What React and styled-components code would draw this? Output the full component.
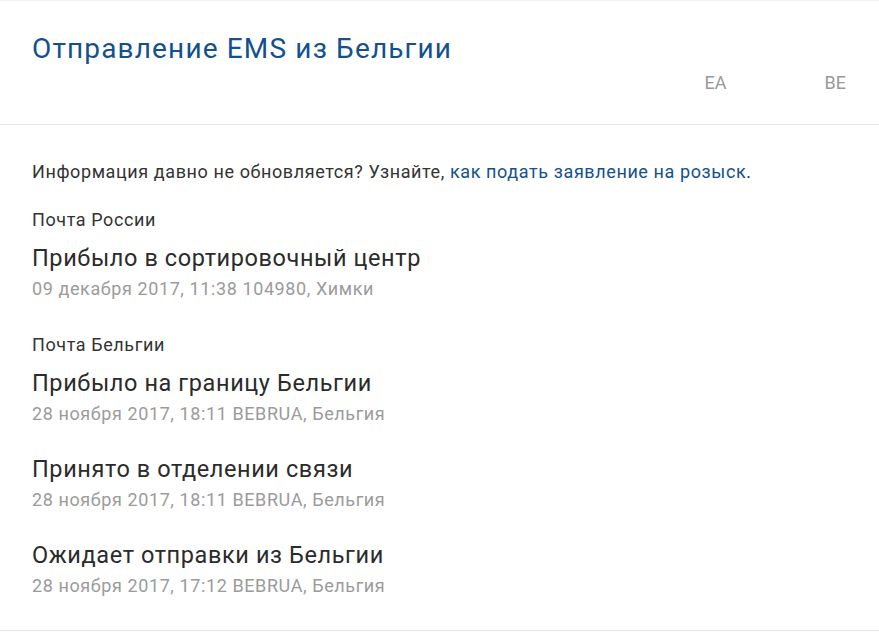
import React from "react";
import styled, { createGlobalStyle } from "styled-components";

const Global = createGlobalStyle`
  html, body { margin: 0; padding: 0; background: #fff; }
  body { font-family: Roboto, "Noto Sans", Arial, sans-serif; -webkit-font-smoothing: antialiased; }
`;

const Card = styled.div`
  border-top: 1px solid #f0f0f0;
  border-bottom: 1px solid #e6e6e6;
  background: #fff;
`;

const Header = styled.header`
  padding: 31px 33px 29px 32px;
  border-bottom: 1px solid #e6e6e6;
  display: flex;
  flex-direction: column;
  gap: 5px;
`;

const Title = styled.h1`
  margin: 0;
  font-size: 28px;
  line-height: 34px;
  letter-spacing: 1.15px;
  font-weight: 400;
  color: #13508f;
`;

const Tracking = styled.div`
  align-self: flex-end;
  font-size: 18px;
  line-height: 24px;
  color: #9a9a9a;
  display: flex;
`;

const Hidden = styled.span`
  display: inline-block;
  width: 98px;
`;

const Body = styled.section`
  padding: 35px 32px 29px;
  letter-spacing: 0.6px;
`;

const Info = styled.p`
  margin: 0 0 24px;
  font-size: 18px;
  line-height: 24px;
  color: #333;
`;

const Link = styled.a`
  color: #13508f;
  text-decoration: none;
`;

const Group = styled.div`
  & + & { margin-top: 29px; }
`;

const Operator = styled.div`
  font-size: 18px;
  line-height: 24px;
  color: #333;
  margin-bottom: 10px;
`;

const Events = styled.div`
  display: flex;
  flex-direction: column;
  gap: 24px;
`;

const EventTitle = styled.div`
  font-size: 23.5px;
  line-height: 32px;
  color: #2b2b2b;
`;

const EventMeta = styled.div`
  font-size: 18px;
  line-height: 30px;
  color: #9b9b9b;
`;

const groups = [
  {
    operator: "Почта России",
    events: [
      { title: "Прибыло в сортировочный центр", meta: "09 декабря 2017, 11:38 104980, Химки" },
    ],
  },
  {
    operator: "Почта Бельгии",
    events: [
      { title: "Прибыло на границу Бельгии", meta: "28 ноября 2017, 18:11 BEBRUA, Бельгия" },
      { title: "Принято в отделении связи", meta: "28 ноября 2017, 18:11 BEBRUA, Бельгия" },
      { title: "Ожидает отправки из Бельгии", meta: "28 ноября 2017, 17:12 BEBRUA, Бельгия" },
    ],
  },
];

export default function App() {
  return (
    <>
      <Global />
      <Card>
        <Header>
          <Title>Отправление EMS из Бельгии</Title>
          <Tracking>
            <span>EA</span>
            <Hidden />
            <span>BE</span>
          </Tracking>
        </Header>
        <Body>
          <Info>
            Информация давно не обновляется? Узнайте,{" "}
            <Link href="#">как подать заявление на розыск</Link>.
          </Info>
          {groups.map((g) => (
            <Group key={g.operator}>
              <Operator>{g.operator}</Operator>
              <Events>
                {g.events.map((e, i) => (
                  <div key={i}>
                    <EventTitle>{e.title}</EventTitle>
                    <EventMeta>{e.meta}</EventMeta>
                  </div>
                ))}
              </Events>
            </Group>
          ))}
        </Body>
      </Card>
    </>
  );
}
